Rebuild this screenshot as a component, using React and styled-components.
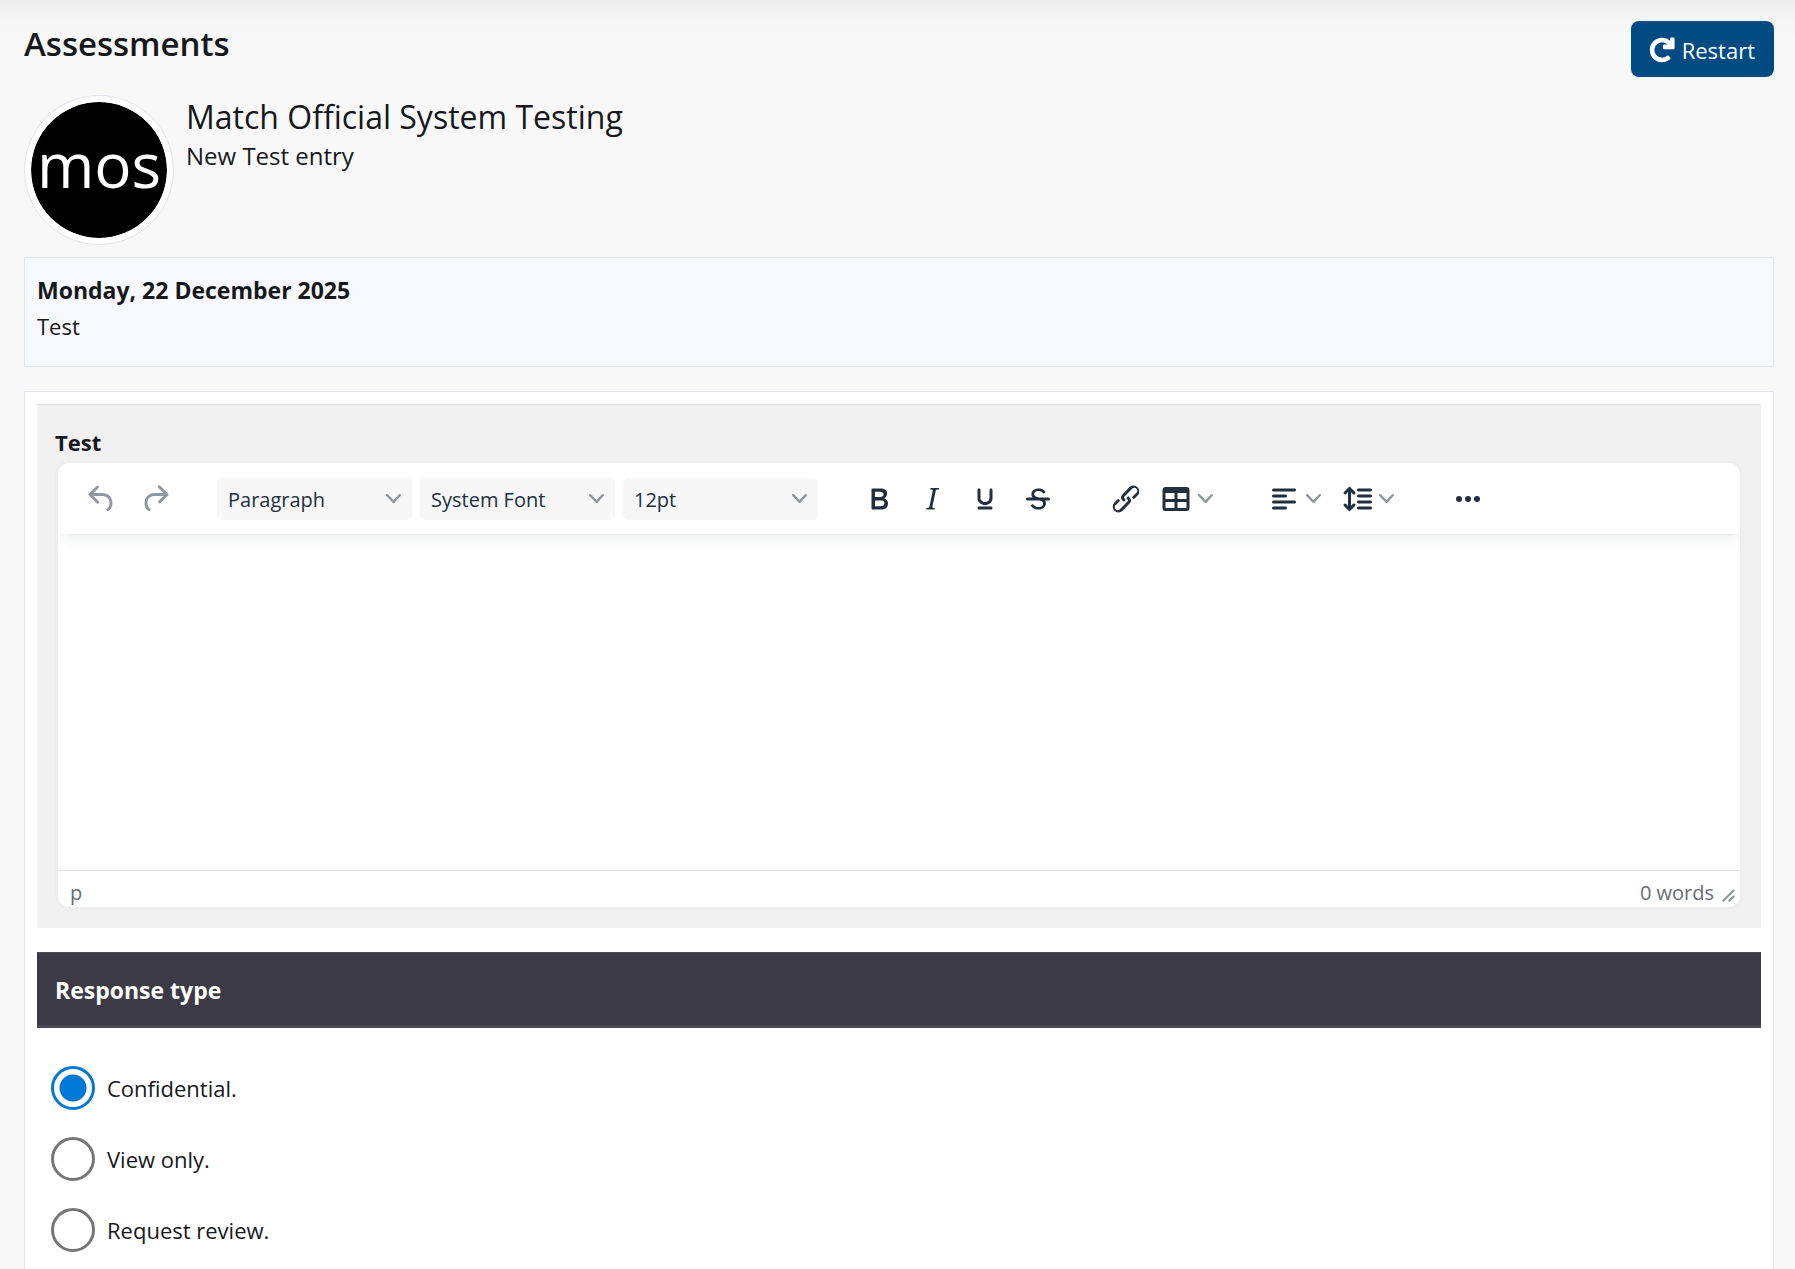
import React, { useState } from "react";
import styled, { createGlobalStyle, css } from "styled-components";
import { FaRedo } from "react-icons/fa";

const GlobalStyle = createGlobalStyle`
  * {
    box-sizing: border-box;
  }
  body {
    margin: 0;
    background: #f8f8f8;
    color: #16181b;
    font-family: "Open Sans", "Noto Sans", sans-serif;
    font-size: 22px;
  }
`;

const Page = styled.div`
  display: flex;
  flex-direction: column;
  min-height: 100vh;
  padding: 21px 21px 0 24px;
  background: linear-gradient(#ededed, #f3f3f3 12px, #f8f8f8 36px);
`;
const TopBar = styled.header`
  display: flex;
  justify-content: space-between;
  align-items: flex-start;
  height: 74px;
`;
const PageTitle = styled.h1`
  margin: 0;
  font-size: 33px;
  font-weight: 600;
  line-height: 46px;
`;
const RestartButton = styled.button`
  display: flex;
  align-items: center;
  gap: 8px;
  height: 56px;
  padding: 2px 19px 0;
  border: none;
  border-radius: 8px;
  background: #004b82;
  color: #fff;
  font: inherit;
  cursor: pointer;
`;
const RestartIcon = styled(FaRedo)`
  width: 24px;
  height: 24px;
  overflow: visible;
  stroke-width: 26px;
`;
const Profile = styled.section`
  display: flex;
  gap: 12px;
  margin-bottom: 12px;
`;
const Avatar = styled.svg`
  flex: none;
  width: 150px;
  height: 150px;
  padding: 6px;
  border: 1px solid #e1e2ee;
  border-radius: 50%;
  background: #fff;
`;
const ProfileName = styled.h2`
  margin: 0;
  font-size: 32px;
  font-weight: 400;
  line-height: 44px;
`;
const ProfileNote = styled.p`
  margin: 0;
  font-size: 24px;
  line-height: 34px;
`;
const DateBox = styled.section`
  height: 110px;
  margin-bottom: 24px;
  padding: 14px 12px;
  border: 1px solid #e0e3ef;
  background: #f8f9fe;
  line-height: 36px;
`;
const DateLine = styled.div`
  font-size: 23px;
  font-weight: 700;
`;
const Card = styled.main`
  flex: 1;
  padding: 12px;
  border: 1px solid #e1e2ee;
  border-bottom: none;
  background: #fff;
`;
const Panel = styled.section`
  margin-bottom: 24px;
  padding: 18px;
  border-top: 1px solid #dcdde9;
  background: #f1f1f1;
`;
const PanelLabel = styled.label`
  display: block;
  padding-top: 2px;
  font-weight: 700;
  line-height: 35px;
`;
const Editor = styled.div`
  display: flex;
  flex-direction: column;
  overflow: hidden;
  border: 3px solid #eee;
  border-radius: 15px;
  background: #fff;
`;
const Toolbar = styled.div`
  position: relative;
  display: flex;
  gap: 35px;
  height: 71px;
  padding: 0 18px;
  align-items: center;
  background: #fff;
  box-shadow: 0 3px 3px -3px rgba(34, 47, 62, 0.1), 0 12px 12px -6px rgba(34, 47, 62, 0.07);
`;
const ToolGroup = styled.div`
  display: flex;
  gap: ${(props) => (props.$wide ? "8px" : "0")};
`;
const toolButton = css`
  display: flex;
  align-items: center;
  height: 42px;
  border: none;
  border-radius: 5px;
  background: none;
  color: #222f3e;
  cursor: pointer;
  &:disabled {
    color: #90979f;
    cursor: default;
  }
`;
const IconButton = styled.button`
  ${toolButton}
  justify-content: center;
  width: 51px;
  margin-right: 2px;
  padding: 0;
`;
const MenuButton = styled.button`
  ${toolButton}
  gap: 4px;
  width: 67px;
  margin-right: 6px;
  padding: 0 5px;
`;
const Icon = styled.svg`
  flex: none;
  width: 36px;
  height: 36px;
  fill: currentColor;
`;
const SmallIcon = styled.svg`
  flex: none;
  width: 15px;
  height: 15px;
  fill: #90979f;
`;
const SelectBox = styled.div`
  display: flex;
  align-items: center;
  width: 195px;
  height: 42px;
  padding-right: 11px;
  border-radius: 5px;
  background: #f7f7f7;
`;
const Select = styled.select`
  flex: 1;
  min-width: 0;
  height: 100%;
  padding: 2px 0 0 11px;
  border: none;
  appearance: none;
  background: none;
  color: #222f3e;
  font-family: inherit;
  font-size: 20px;
`;
const TextArea = styled.textarea`
  display: block;
  width: 100%;
  height: 336px;
  padding: 24px;
  border: none;
  outline: none;
  resize: none;
  font: inherit;
`;
const StatusBar = styled.div`
  display: flex;
  align-items: center;
  gap: 7px;
  height: 37px;
  padding: 6px 4px 0 12px;
  border-top: 1px solid #e3e4e6;
  color: #646d78;
  font-size: 20px;
`;
const ResizeHandle = styled(SmallIcon)`
  align-self: flex-end;
  margin-bottom: 4px;
`;
const ElementPath = styled.span`
  flex: 1;
`;
const SectionTitle = styled.h3`
  margin: 0 0 24px;
  padding: 2px 18px 0;
  border-top: 1px solid #4a4a57;
  border-bottom: 3px solid #4a4a57;
  background: #3c3b45;
  color: #fff;
  font-size: 23px;
  font-weight: 700;
  line-height: 70px;
`;
const Options = styled.fieldset`
  display: flex;
  flex-direction: column;
  gap: 27px;
  margin: 0;
  padding: 14px;
  border: none;
`;
const Option = styled.label`
  display: flex;
  align-items: center;
  gap: 12px;
  line-height: 44px;
  cursor: pointer;
`;
const Radio = styled.input`
  flex: none;
  width: 44px;
  height: 44px;
  margin: 0;
  border: 3px solid #767676;
  border-radius: 50%;
  appearance: none;
  background: #fff;
  &:checked {
    border-color: #0078d7;
    background: radial-gradient(circle, #0078d7 13px, #fff 14px);
  }
`;

const icons = {
  undo: "M6.4 8H12c3.7 0 6.2 2 6.8 5.1.6 2.7-.4 5.6-2.3 6.8a1 1 0 0 1-1-1.8c1.1-.6 1.8-2.7 1.4-4.6-.5-2.1-2.1-3.5-4.9-3.5H6.4l3.3 3.3a1 1 0 1 1-1.4 1.4l-5-5a1 1 0 0 1 0-1.4l5-5a1 1 0 0 1 1.4 1.4L6.4 8Z",
  redo: "M17.6 10H12c-2.8 0-4.4 1.4-4.9 3.5-.4 2 .3 4 1.4 4.6a1 1 0 1 1-1 1.8c-2-1.2-2.9-4.1-2.3-6.8.6-3 3-5.1 6.8-5.1h5.6l-3.3-3.3a1 1 0 1 1 1.4-1.4l5 5a1 1 0 0 1 0 1.4l-5 5a1 1 0 0 1-1.4-1.4l3.3-3.3Z",
  bold: "M7.8 19c-.3 0-.5 0-.6-.2l-.2-.5V5.7c0-.2 0-.4.2-.5l.6-.2h5c1.5 0 2.7.3 3.5 1 .7.6 1.1 1.4 1.1 2.5a3 3 0 0 1-.6 1.9c-.4.6-1 1-1.6 1.2.4.1.9.3 1.3.6s.8.7 1 1.2c.4.4.5 1 .5 1.6 0 1.3-.4 2.3-1.3 3-.8.7-2.1 1-3.8 1H7.8Zm5-8.3c.6 0 1.2-.1 1.6-.5.4-.3.6-.7.6-1.3 0-1.1-.8-1.7-2.3-1.7H9.3v3.5h3.4Zm.5 6c.7 0 1.3-.1 1.7-.4.4-.4.6-.9.6-1.5s-.2-1-.7-1.4c-.4-.3-1-.4-2-.4H9.4v3.8h4Z",
  italic: "m16.7 4.7-.1.9h-.3c-.6 0-1 0-1.4.3-.3.3-.4.6-.5 1.1l-2.1 9.8v.6c0 .5.4.8 1.4.8h.2l-.2.8H8l.2-.8h.2c1.1 0 1.8-.5 2-1.5l2-9.8.1-.5c0-.6-.4-.8-1.4-.8h-.3l.2-.9h5.8Z",
  underline: "M16 5c.6 0 1 .4 1 1v5.5a4 4 0 0 1-.4 1.8l-1 1.4a5.3 5.3 0 0 1-5.5 1 5 5 0 0 1-1.6-1c-.5-.4-.8-.9-1.1-1.4a4 4 0 0 1-.4-1.8V6c0-.6.4-1 1-1s1 .4 1 1v5.5c0 .3 0 .6.2 1l.6.7a3.3 3.3 0 0 0 2.2.8 3.4 3.4 0 0 0 2.2-.8c.3-.2.4-.5.6-.8l.2-.9V6c0-.6.4-1 1-1ZM8 17h8c.6 0 1 .4 1 1s-.4 1-1 1H8a1 1 0 0 1 0-2Z",
  strike: "M15.6 8.5c-.5-.7-1-1.1-1.3-1.3-.6-.4-1.3-.6-2-.6-2.7 0-2.8 1.7-2.8 2.1 0 1.6 1.8 2 3.2 2.3 4.4.9 4.6 2.8 4.6 3.9 0 1.4-.7 4.1-5 4.1A6.2 6.2 0 0 1 7 16.4l1.5-1.1c.4.6 1.6 2 3.7 2 1.6 0 2.5-.4 3-1.2.4-.8.3-2-.8-2.6-.7-.4-1.6-.7-2.9-1-1-.2-3.9-.8-3.9-3.6C7.6 6 10.3 5 12.4 5c2.9 0 4.2 1.6 4.7 2.4l-1.5 1.1Z M5 11h14a1 1 0 0 1 0 2H5a1 1 0 0 1 0-2Z",
  link: "M6.2 12.3a1 1 0 0 1 1.4 1.4l-2 2a2 2 0 1 0 2.6 2.8l4.8-4.8a1 1 0 0 0 0-1.4 1 1 0 1 1 1.4-1.3 2.9 2.9 0 0 1 0 4L9.6 20a3.9 3.9 0 0 1-5.5-5.5l2-2Zm11.6-.6a1 1 0 0 1-1.4-1.4l2-2a2 2 0 1 0-2.6-2.8L11 10.3a1 1 0 0 0 0 1.4A1 1 0 1 1 9.6 13a2.9 2.9 0 0 1 0-4L14.4 4a3.9 3.9 0 0 1 5.5 5.5l-2 2Z",
  table: "M19 4a2 2 0 0 1 2 2v12a2 2 0 0 1-2 2H5a2 2 0 0 1-2-2V6c0-1.1.9-2 2-2h14ZM5 14v4h6v-4H5Zm14 0h-6v4h6v-4Zm0-6h-6v4h6V8ZM5 12h6V8H5v4Z",
  align: "M5 5h14c.6 0 1 .4 1 1s-.4 1-1 1H5a1 1 0 1 1 0-2Zm0 4h8c.6 0 1 .4 1 1s-.4 1-1 1H5a1 1 0 1 1 0-2Zm0 8h8c.6 0 1 .4 1 1s-.4 1-1 1H5a1 1 0 0 1 0-2Zm0-4h14c.6 0 1 .4 1 1s-.4 1-1 1H5a1 1 0 0 1 0-2Z",
  lineHeight: "M21 5a1 1 0 0 1 .1 2H13a1 1 0 0 1-.1-2H21zm0 4a1 1 0 0 1 .1 2H13a1 1 0 0 1-.1-2H21zm0 4a1 1 0 0 1 .1 2H13a1 1 0 0 1-.1-2H21zm0 4a1 1 0 0 1 .1 2H13a1 1 0 0 1-.1-2H21zM7 3.6l3.7 3.7a1 1 0 0 1-1.3 1.5h-.1L8 7.3v9.2l1.3-1.3a1 1 0 0 1 1.3 0h.1c.4.4.4 1 0 1.3v.1L7 20.4l-3.7-3.7a1 1 0 0 1 1.3-1.5h.1L6 16.7V7.4L4.7 8.7a1 1 0 0 1-1.3 0h-.1a1 1 0 0 1 0-1.3v-.1L7 3.6z",
  more: "M6 10a2 2 0 0 0-2 2c0 1.1.9 2 2 2a2 2 0 0 0 2-2 2 2 0 0 0-2-2Zm12 0a2 2 0 0 0-2 2c0 1.1.9 2 2 2a2 2 0 0 0 2-2 2 2 0 0 0-2-2Zm-6 0a2 2 0 0 0-2 2c0 1.1.9 2 2 2a2 2 0 0 0 2-2 2 2 0 0 0-2-2Z",
};

const Chevron = () => (
  <SmallIcon viewBox="0 0 10 10" aria-hidden="true">
    <path d="M8.7 2.2c.3-.3.8-.3 1 0 .4.4.4.9 0 1.2L5.7 7.8c-.3.3-.9.3-1.2 0L.2 3.4a.8.8 0 0 1 0-1.2c.3-.3.8-.3 1.1 0L5 6l3.7-3.8Z" />
  </SmallIcon>
);

const Tool = ({ icon, label, menu, disabled }) => {
  const Button = menu ? MenuButton : IconButton;
  return (
    <Button type="button" aria-label={label} disabled={disabled}>
      <Icon viewBox="0 0 24 24" aria-hidden="true">
        <path d={icons[icon]} />
      </Icon>
      {menu && <Chevron />}
    </Button>
  );
};

const ToolSelect = ({ label, options }) => (
  <SelectBox>
    <Select aria-label={label}>
      {options.map((option) => (
        <option key={option}>{option}</option>
      ))}
    </Select>
    <Chevron />
  </SelectBox>
);

const responseTypes = ["Confidential.", "View only.", "Request review."];

const App = () => {
  const [text, setText] = useState("");
  const [responseType, setResponseType] = useState(responseTypes[0]);

  const words = text.split(/\s+/).filter(Boolean).length;

  return (
    <>
      <GlobalStyle />
      <Page>
        <TopBar>
          <PageTitle>Assessments</PageTitle>
          <RestartButton type="button">
            <RestartIcon aria-hidden="true" />
            Restart
          </RestartButton>
        </TopBar>
        <Profile>
          <Avatar viewBox="0 0 136 136" role="img" aria-label="mos">
            <circle cx="68" cy="68" r="68" fill="#000" />
            <text x="68" y="86" textAnchor="middle" fontSize="62" fill="#fff">
              mos
            </text>
          </Avatar>
          <div>
            <ProfileName>Match Official System Testing</ProfileName>
            <ProfileNote>New Test entry</ProfileNote>
          </div>
        </Profile>
        <DateBox>
          <DateLine>Monday, 22 December 2025</DateLine>
          <div>Test</div>
        </DateBox>
        <Card>
          <Panel>
            <PanelLabel htmlFor="test-text">Test</PanelLabel>
            <Editor>
              <Toolbar>
                <ToolGroup>
                  <Tool icon="undo" label="Undo" disabled />
                  <Tool icon="redo" label="Redo" disabled />
                </ToolGroup>
                <ToolGroup $wide>
                  <ToolSelect label="Block format" options={["Paragraph"]} />
                  <ToolSelect label="Font" options={["System Font"]} />
                  <ToolSelect label="Font size" options={["12pt"]} />
                </ToolGroup>
                <ToolGroup>
                  <Tool icon="bold" label="Bold" />
                  <Tool icon="italic" label="Italic" />
                  <Tool icon="underline" label="Underline" />
                  <Tool icon="strike" label="Strikethrough" />
                </ToolGroup>
                <ToolGroup>
                  <Tool icon="link" label="Link" />
                  <Tool icon="table" label="Table" menu />
                </ToolGroup>
                <ToolGroup>
                  <Tool icon="align" label="Align" menu />
                  <Tool icon="lineHeight" label="Line height" menu />
                </ToolGroup>
                <ToolGroup>
                  <Tool icon="more" label="More" />
                </ToolGroup>
              </Toolbar>
              <TextArea id="test-text" value={text} onChange={(e) => setText(e.target.value)} />
              <StatusBar>
                <ElementPath>p</ElementPath>
                <span>{words} words</span>
                <ResizeHandle viewBox="0 0 10 10" aria-hidden="true">
                  <path d="M8.1 1.1A.5.5 0 1 1 9 2l-7 7A.5.5 0 1 1 1 8l7-7ZM8.1 5.1A.5.5 0 1 1 9 6l-3 3A.5.5 0 1 1 5 8l3-3Z" />
                </ResizeHandle>
              </StatusBar>
            </Editor>
          </Panel>
          <SectionTitle>Response type</SectionTitle>
          <Options aria-label="Response type">
            {responseTypes.map((type) => (
              <Option key={type}>
                <Radio
                  type="radio"
                  name="response-type"
                  checked={responseType === type}
                  onChange={() => setResponseType(type)}
                />
                {type}
              </Option>
            ))}
          </Options>
        </Card>
      </Page>
    </>
  );
};
export default App;
